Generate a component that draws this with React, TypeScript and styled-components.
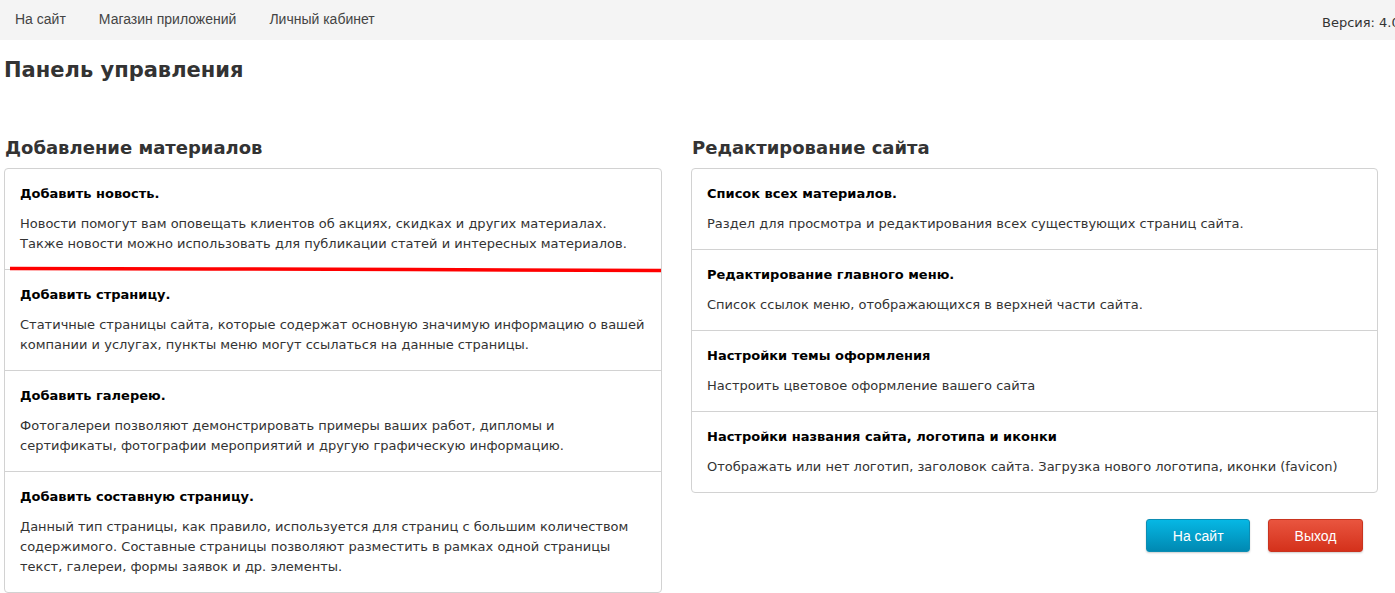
import React from "react";
import styled, { createGlobalStyle } from "styled-components";

const Global = createGlobalStyle`
  html, body { margin: 0; padding: 0; overflow-x: hidden; background: #fff; }
  body { font-family: "DejaVu Sans", Verdana, sans-serif; font-size: 13px; color: #333; }
  * { box-sizing: border-box; }
`;

const TopBar = styled.nav`
  height: 40px;
  background: #f4f4f4;
  display: flex;
  align-items: center;
  padding-left: 15px;
  overflow: hidden;
  white-space: nowrap;
`;

const NavLink = styled.a`
  font-family: "Liberation Sans", Arial, sans-serif;
  font-size: 14px;
  color: #444;
  text-decoration: none;
  margin-right: 33px;
  margin-top: -2px;
`;

const Version = styled.span`
  margin-left: auto;
  width: 73px;
  flex-shrink: 0;
  font-size: 13px;
  color: #333;
  margin-top: 4px;
`;

const PageTitle = styled.h1`
  margin: 18px 0 0 4px;
  font-size: 21px;
  line-height: 24px;
  font-weight: bold;
  color: #333;
`;

const Columns = styled.div`
  display: grid;
  grid-template-columns: 658px 687px;
  column-gap: 29px;
  padding-left: 4px;
  margin-top: 55px;
  align-items: start;
`;

const Column = styled.section`
  display: flex;
  flex-direction: column;
`;

const SectionTitle = styled.h3`
  margin: 0 0 9px 1px;
  font-size: 18px;
  line-height: 22px;
  font-weight: bold;
  color: #333;
`;

const Card = styled.div`
  border: 1px solid #d2d2d2;
  border-radius: 4px;
  background: #fff;
`;

const Item = styled.div`
  position: relative;
  padding: 15px 15px 15px;
  & + & { border-top: 1px solid #d2d2d2; }
`;

const ItemTitle = styled.div`
  font-weight: bold;
  font-size: 13px;
  line-height: 20px;
  color: #000;
  margin-bottom: 10px;
`;

const ItemText = styled.div`
  font-size: 13px;
  line-height: 20px;
  color: #333;
`;

const Mark = styled.svg`
  position: absolute;
  z-index: 2;
  left: 5px;
  bottom: -4px;
  width: 651px;
  height: 6px;
  overflow: visible;
`;

const Buttons = styled.div`
  display: flex;
  justify-content: flex-end;
  gap: 18px;
  margin-top: 26px;
  padding-right: 15px;
`;

const Button = styled.button<{ $tone: "info" | "danger" }>`
  height: 33px;
  padding: 0 25.5px;
  font-family: "Liberation Sans", Arial, sans-serif;
  font-size: 14px;
  color: #fff;
  border-radius: 3px;
  cursor: pointer;
  box-shadow: 0 1px 2px rgba(0, 0, 0, 0.2);
  border: 1px solid ${(p) => (p.$tone === "info" ? "#0c8db3" : "#c9331f")};
  background: ${(p) =>
    p.$tone === "info"
      ? "linear-gradient(to bottom, #06b7e4, #0089b2)"
      : "linear-gradient(to bottom, #e9553f, #d4311b)"};
`;

type Entry = { title: string; text: string[] };

const addItems: Entry[] = [
  {
    title: "Добавить новость.",
    text: [
      "Новости помогут вам оповещать клиентов об акциях, скидках и других материалах.",
      "Также новости можно использовать для публикации статей и интересных материалов.",
    ],
  },
  {
    title: "Добавить страницу.",
    text: [
      "Статичные страницы сайта, которые содержат основную значимую информацию о вашей",
      "компании и услугах, пункты меню могут ссылаться на данные страницы.",
    ],
  },
  {
    title: "Добавить галерею.",
    text: [
      "Фотогалереи позволяют демонстрировать примеры ваших работ, дипломы и",
      "сертификаты, фотографии мероприятий и другую графическую информацию.",
    ],
  },
  {
    title: "Добавить составную страницу.",
    text: [
      "Данный тип страницы, как правило, используется для страниц с большим количеством",
      "содержимого. Составные страницы позволяют разместить в рамках одной страницы",
      "текст, галереи, формы заявок и др. элементы.",
    ],
  },
];

const editItems: Entry[] = [
  {
    title: "Список всех материалов.",
    text: ["Раздел для просмотра и редактирования всех существующих страниц сайта."],
  },
  {
    title: "Редактирование главного меню.",
    text: ["Список ссылок меню, отображающихся в верхней части сайта."],
  },
  {
    title: "Настройки темы оформления",
    text: ["Настроить цветовое оформление вашего сайта"],
  },
  {
    title: "Настройки названия сайта, логотипа и иконки",
    text: ["Отображать или нет логотип, заголовок сайта. Загрузка нового логотипа, иконки (favicon)"],
  },
];

function ItemList({ items, marked }: { items: Entry[]; marked?: boolean }) {
  return (
    <Card>
      {items.map((it, i) => (
        <Item key={it.title}>
          <ItemTitle>{it.title}</ItemTitle>
          <ItemText>
            {it.text.map((line) => (
              <div key={line}>{line}</div>
            ))}
          </ItemText>
          {marked && i === 0 && (
            <Mark viewBox="0 0 651 6" preserveAspectRatio="none">
              <polyline
                points="0,1.5 200,2 400,2.5 651,3.5"
                fill="none"
                stroke="#ff0000"
                strokeWidth="3.5"
              />
            </Mark>
          )}
        </Item>
      ))}
    </Card>
  );
}

export default function App() {
  return (
    <>
      <Global />
      <TopBar>
        <NavLink href="#">На сайт</NavLink>
        <NavLink href="#">Магазин приложений</NavLink>
        <NavLink href="#">Личный кабинет</NavLink>
        <Version>Версия: 4.0.1</Version>
      </TopBar>
      <PageTitle>Панель управления</PageTitle>
      <Columns>
        <Column>
          <SectionTitle>Добавление материалов</SectionTitle>
          <ItemList items={addItems} marked />
        </Column>
        <Column>
          <SectionTitle>Редактирование сайта</SectionTitle>
          <ItemList items={editItems} />
          <Buttons>
            <Button $tone="info">На сайт</Button>
            <Button $tone="danger">Выход</Button>
          </Buttons>
        </Column>
      </Columns>
    </>
  );
}
